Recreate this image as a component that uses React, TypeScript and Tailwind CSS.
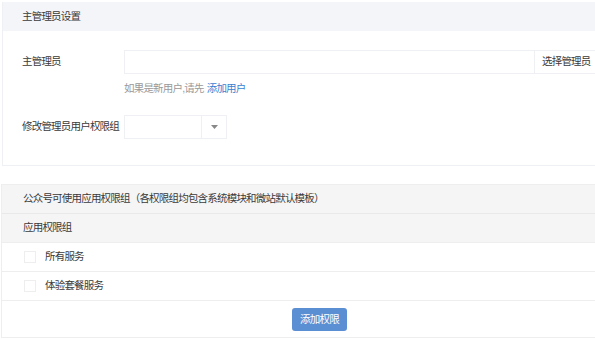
import React from "react";

const font = { fontFamily: '"Liberation Sans", "Noto Sans CJK SC", sans-serif' };

export default function App() {
  return (
    <div
      className="w-[595px] h-[339px] overflow-hidden bg-white pt-[2px] pl-[2px] text-[10.5px] tracking-[-0.8px] text-[#3a3a3a]"
      style={font}
    >
      <div className="w-[620px] border border-[#eef0f3]">
        <div className="h-[29px] bg-[#f4f5f8] flex items-center pl-[19px] -mt-px">主管理员设置</div>
        <div className="pt-[19px] pb-[26px] pl-[19px]">
          <div className="flex items-center h-[24px]">
            <div className="w-[102px]">主管理员</div>
            <div className="w-[411px] h-[24px] border border-[#eef0f3]" />
            <div className="h-[24px] border border-l-0 border-[#eef0f3] pl-[7px] pr-[10px] flex items-center">选择管理员</div>
          </div>
          <div className="pl-[102px] mt-[7px] h-[16px] flex items-center text-[#999]">
            如果是新用户,请先<span className="ml-[3px] text-[#3a7fd0]">添加用户</span>
          </div>
          <div className="flex items-center mt-[18px] h-[24px]">
            <div className="w-[102px] whitespace-nowrap">修改管理员用户权限组</div>
            <div className="flex h-[24px] border border-[#eef0f3]">
              <div className="w-[77px] border-r border-[#eef0f3]" />
              <div className="w-[24px] flex items-center justify-center">
                <svg width="7" height="4" viewBox="0 0 7 4"><path d="M0 0h7L3.5 4z" fill="#888" /></svg>
              </div>
            </div>
          </div>
        </div>
      </div>

      <div className="w-[640px] border border-[#eeeeee] mt-[18px] -ml-px">
        <div className="h-[28px] bg-[#f5f5f5] flex items-center pl-[21px]">
          公众号可使用应用权限组（各权限组均包含系统模块和微站默认模板）
        </div>
        <div className="h-[29px] bg-[#f5f5f5] border-t border-[#e9e9e9] flex items-center pl-[21px]">应用权限组</div>
        <div className="h-[29px] border-t border-[#eeeeee] flex items-center pl-[22px]">
          <span className="w-[12px] h-[12px] border border-[#eeeeee] mr-[9px]" />
          所有服务
        </div>
        <div className="h-[29px] border-t border-[#eeeeee] flex items-center pl-[22px]">
          <span className="w-[12px] h-[12px] border border-[#eeeeee] mr-[9px]" />
          体验套餐服务
        </div>
        <div className="h-[37px] border-t border-[#eeeeee] pt-[7px] pl-[290px]">
          <div className="w-[55px] h-[23px] rounded-[3px] bg-[#5b8fd3] text-white flex items-center justify-center">
            添加权限
          </div>
        </div>
      </div>
    </div>
  );
}
